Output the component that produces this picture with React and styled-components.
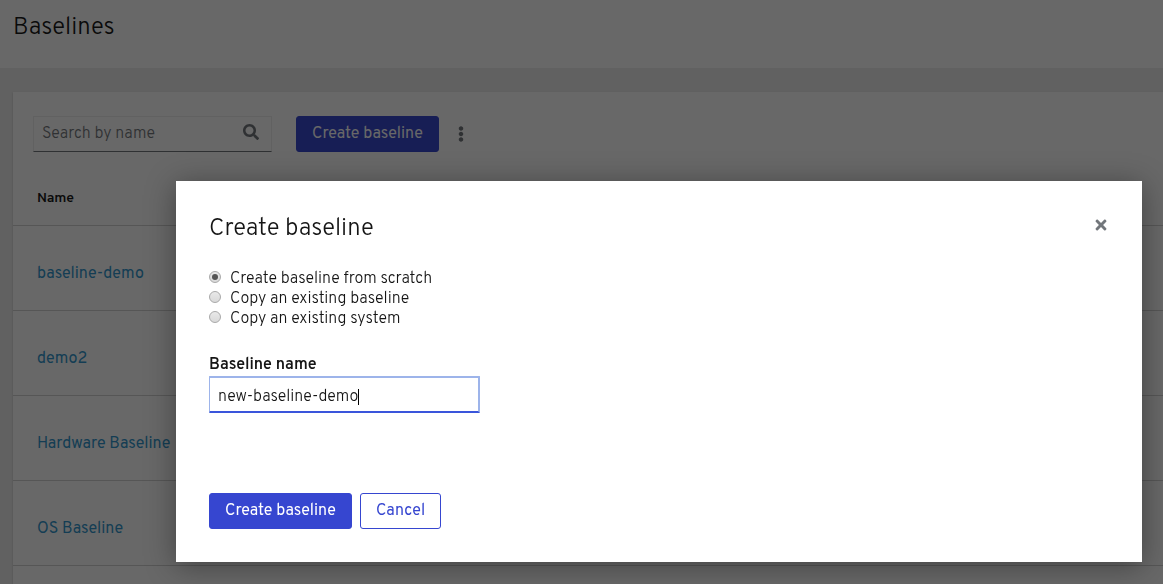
import React from 'react';
import styled, { createGlobalStyle } from 'styled-components';
import { FaSearch, FaEllipsisV, FaTimes } from 'react-icons/fa';

const GlobalStyle = createGlobalStyle`
  *, *::before, *::after { box-sizing: border-box; }
  body {
    margin: 0;
    overflow: hidden;
    background: #ededed;
    color: #151515;
    font-family: Overpass, Roboto, "Open Sans", sans-serif;
    font-size: 16px;
    line-height: 20px;
  }
  button { font: inherit; }
`;

const Page = styled.div`
  height: 584px;
  overflow: hidden;
  display: flex;
  flex-direction: column;
`;

const PageHeader = styled.header`
  flex: 0 0 68px;
  padding: 10px 13px;
  background: #fff;
`;

const Title = styled.h1`
  margin: 0;
  font-size: 24px;
  font-weight: 300;
  line-height: 36px;
`;

const Main = styled.main`
  flex: 1;
  min-height: 0;
  padding: 24px 0 0 13px;
`;

const Card = styled.section`
  height: 100%;
  background: #fff;
  box-shadow: 0 1px 2px rgba(3, 3, 3, 0.2);
`;

const Toolbar = styled.div`
  display: flex;
  align-items: center;
  padding: 24px 20px 0;
`;

const SearchBox = styled.div`
  display: flex;
  align-items: center;
  justify-content: space-between;
  width: 239px;
  height: 36px;
  margin-right: 24px;
  padding: 0 12px 4px 8px;
  border: 1px solid #ededed;
  border-bottom-color: #72767b;
  color: #72767b;
  font-weight: 300;
  span { padding-top: 3px; }
`;

const Button = styled.button`
  height: 36px;
  width: ${({ $width }) => $width};
  padding: 0;
  border: 1px solid #3646d0;
  border-radius: 3px;
  background: ${({ $secondary }) => ($secondary ? '#fff' : '#3646d0')};
  color: ${({ $secondary }) => ($secondary ? '#3646d0' : '#fff')};
  white-space: nowrap;
`;

const Kebab = styled.span`
  display: flex;
  justify-content: center;
  width: 44px;
  color: #72767b;
`;

const Table = styled.div`
  display: flex;
  flex-direction: column;
`;

const HeadRow = styled.div`
  height: 74px;
  padding: 37px 24px 0;
  border-bottom: 1px solid #d2d2d2;
  font-size: 14px;
  font-weight: 600;
  letter-spacing: -0.2px;
`;

const Row = styled.div`
  display: flex;
  align-items: center;
  height: 85px;
  padding: 12px 24px 0;
  border-bottom: 1px solid #d2d2d2;
  color: #2f95cc;
`;

const Backdrop = styled.div`
  position: fixed;
  inset: 0;
  padding: 181px 21px 22px 176px;
  background: rgba(3, 3, 3, 0.6);
`;

const Modal = styled.div`
  display: flex;
  flex-direction: column;
  align-items: flex-start;
  width: 966px;
  height: 381px;
  padding: 30px 33px 33px;
  background: #fff;
  box-shadow: 0 4px 28px rgba(3, 3, 3, 0.38);
`;

const ModalHeader = styled.div`
  display: flex;
  justify-content: space-between;
  width: 100%;
  height: 36px;
`;

const Close = styled.span`
  display: flex;
  padding-top: 6px;
  color: #72767b;
`;

const Options = styled.div`
  margin-top: 22px;
`;

const Option = styled.label`
  display: flex;
  align-items: flex-start;
  height: 20px;
  font-weight: 300;
`;

const Radio = styled.span`
  display: flex;
  align-items: center;
  justify-content: center;
  width: 12px;
  height: 12px;
  margin: 2px 9px 0 0;
  border: 1px solid #a9a9a9;
  border-radius: 50%;
  background: linear-gradient(#e9e9e9, #d9d9d9);
  &::after {
    content: '';
    width: 6px;
    height: 6px;
    border-radius: 50%;
    background: ${({ $checked }) => ($checked ? '#555' : 'transparent')};
  }
`;

const Label = styled.div`
  margin-top: 26px;
  font-weight: 600;
  letter-spacing: -0.05px;
`;

const Field = styled.div`
  display: flex;
  align-items: center;
  width: 271px;
  height: 37px;
  margin-top: 1px;
  padding: 5px 0 0 8px;
  border: 1px solid #9db4ea;
  border-top-width: 2px;
  border-bottom: 2px solid #3a55db;
  border-right-width: 2px;
  border-radius: 1px;
  font-weight: 300;
  letter-spacing: -0.06px;
`;

const Caret = styled.span`
  width: 1px;
  height: 16px;
  background: #000;
`;

const Footer = styled.div`
  display: flex;
  gap: 8px;
  margin-top: auto;
`;

const rows = ['baseline-demo', 'demo2', 'Hardware Baseline', 'OS Baseline'];

const options = [
  'Create baseline from scratch',
  'Copy an existing baseline',
  'Copy an existing system',
];

export default function App() {
  return (
    <>
      <GlobalStyle />
      <Page>
        <PageHeader><Title>Baselines</Title></PageHeader>
        <Main>
          <Card>
            <Toolbar>
              <SearchBox><span>Search by name</span><FaSearch size={16} /></SearchBox>
              <Button $width="143px">Create baseline</Button>
              <Kebab><FaEllipsisV size={16} /></Kebab>
            </Toolbar>
            <Table>
              <HeadRow>Name</HeadRow>
              {rows.map((name) => <Row key={name}>{name}</Row>)}
            </Table>
          </Card>
        </Main>
      </Page>
      <Backdrop>
        <Modal role="dialog">
          <ModalHeader>
            <Title as="h2">Create baseline</Title>
            <Close><FaTimes size={16} /></Close>
          </ModalHeader>
          <Options>
            {options.map((text, i) => (
              <Option key={text}><Radio $checked={i === 0} />{text}</Option>
            ))}
          </Options>
          <Label>Baseline name</Label>
          <Field><span>new-baseline-demo</span><Caret /></Field>
          <Footer>
            <Button $width="143px">Create baseline</Button>
            <Button $width="81px" $secondary>Cancel</Button>
          </Footer>
        </Modal>
      </Backdrop>
    </>
  );
}
